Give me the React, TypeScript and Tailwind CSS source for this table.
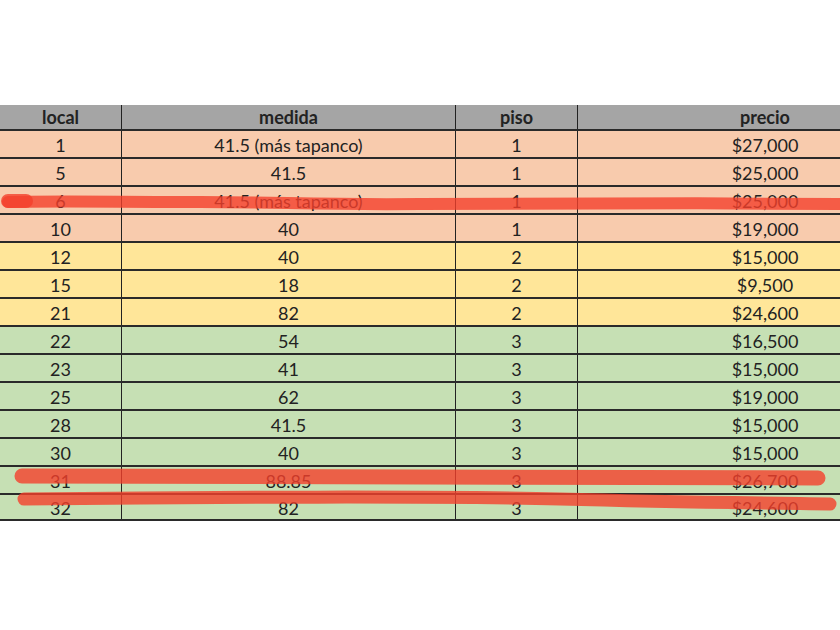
const rows = [
  { local: "1", medida: "41.5 (más tapanco)", piso: "1", precio: "$27,000", tone: "salmon" },
  { local: "5", medida: "41.5", piso: "1", precio: "$25,000", tone: "salmon" },
  { local: "6", medida: "41.5 (más tapanco)", piso: "1", precio: "$25,000", tone: "salmon" },
  { local: "10", medida: "40", piso: "1", precio: "$19,000", tone: "salmon" },
  { local: "12", medida: "40", piso: "2", precio: "$15,000", tone: "yellow" },
  { local: "15", medida: "18", piso: "2", precio: "$9,500", tone: "yellow" },
  { local: "21", medida: "82", piso: "2", precio: "$24,600", tone: "yellow" },
  { local: "22", medida: "54", piso: "3", precio: "$16,500", tone: "green" },
  { local: "23", medida: "41", piso: "3", precio: "$15,000", tone: "green" },
  { local: "25", medida: "62", piso: "3", precio: "$19,000", tone: "green" },
  { local: "28", medida: "41.5", piso: "3", precio: "$15,000", tone: "green" },
  { local: "30", medida: "40", piso: "3", precio: "$15,000", tone: "green" },
  { local: "31", medida: "88.85", piso: "3", precio: "$26,700", tone: "green" },
  { local: "32", medida: "82", piso: "3", precio: "$24,600", tone: "green" },
];

const toneBg: Record<string, string> = {
  salmon: "bg-[#f8cbad]",
  yellow: "bg-[#ffe699]",
  green: "bg-[#c6e0b4]",
};

const cols = "grid grid-cols-[122px_334px_122px_262px]";

export default function App() {
  return (
    <div
      className="w-[840px] h-[630px] bg-white overflow-hidden text-[#222]"
      style={{ fontFamily: "Lato, 'Liberation Sans', sans-serif" }}
    >
      <div className="relative mt-[105px] text-[18px] leading-none">
        {/* Header */}
        <div className={`${cols} h-[24px] bg-[#a5a5a5] font-bold`}>
          <div className="flex items-center justify-center border-r border-[#222]">local</div>
          <div className="flex items-center justify-center border-r border-[#222]">medida</div>
          <div className="flex items-center justify-center border-r border-[#222]">piso</div>
          <div className="flex items-center justify-center pl-[112px]">precio</div>
        </div>

        {rows.map((r, i) => (
          <div
            key={i}
            className={`${cols} h-[28px] border-t-2 border-[#2a2a2a] ${toneBg[r.tone]} ${
              i === rows.length - 1 ? "border-b-2" : ""
            }`}
          >
            <div className="flex items-center justify-center pt-[2px] border-r border-[#222]">{r.local}</div>
            <div className="flex items-center justify-center pt-[2px] border-r border-[#222]">{r.medida}</div>
            <div className="flex items-center justify-center pt-[2px] border-r border-[#222]">{r.piso}</div>
            <div className="flex items-center justify-center pt-[2px] pl-[112px]">{r.precio}</div>
          </div>
        ))}

        {/* marker strokes */}
        <svg
          className="absolute inset-0 pointer-events-none"
          width="840"
          height="420"
          viewBox="0 0 840 420"
        >
          <g fill="none" stroke="#f4402c" strokeOpacity="0.8" strokeLinecap="round">
            <path d="M8 97 C 60 96, 120 97, 200 97 S 320 100, 420 99 S 700 98, 842 99" strokeWidth="12" />
            <path d="M8 96 L 26 96" strokeWidth="14" />
            <path d="M22 371 C 200 370, 500 371, 818 373" strokeWidth="15" />
            <path d="M24 394 C 200 392, 450 391, 560 394 S 760 398, 830 399" strokeWidth="13" />
          </g>
        </svg>
      </div>
    </div>
  );
}
